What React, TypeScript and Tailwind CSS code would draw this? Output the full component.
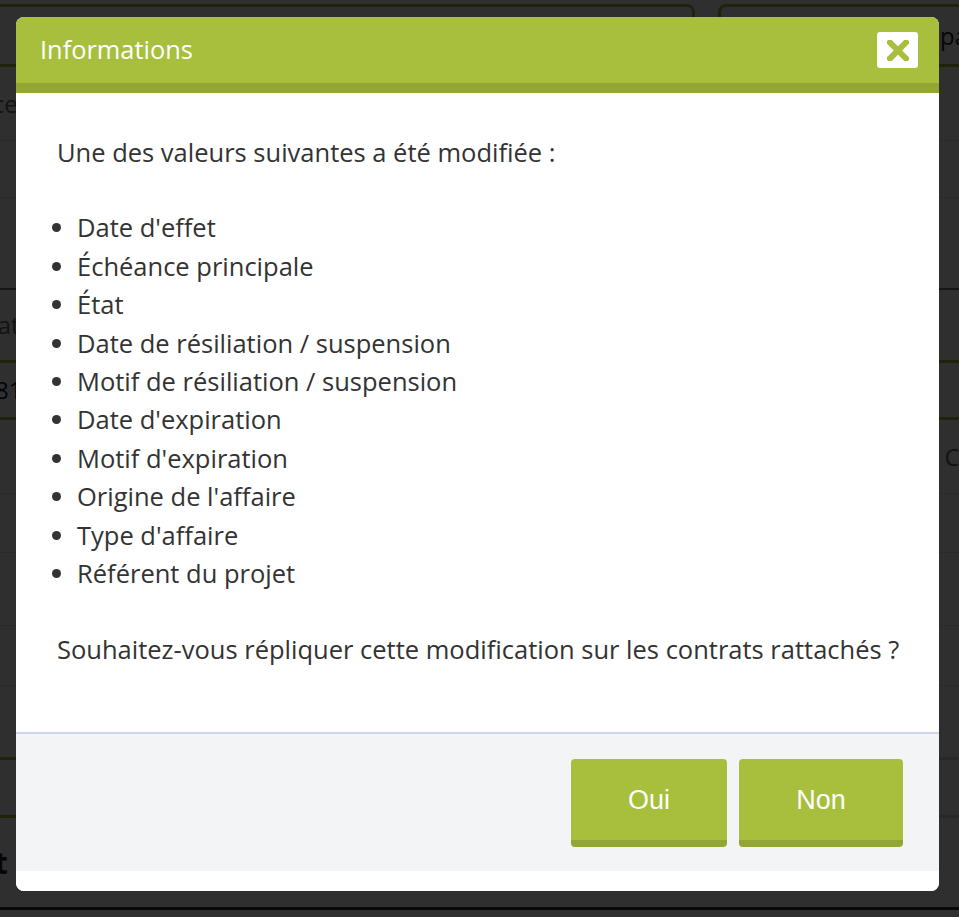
import React from "react";

const items = [
  "Date d'effet",
  "Échéance principale",
  "État",
  "Date de résiliation / suspension",
  "Motif de résiliation / suspension",
  "Date d'expiration",
  "Motif d'expiration",
  "Origine de l'affaire",
  "Type d'affaire",
  "Référent du projet",
];

function Background() {
  return (
    <div className="w-[959px] h-[917px] overflow-hidden bg-white font-['Open_Sans',sans-serif] text-[#666] text-[24px]">
      <div className="h-[4px]" />
      <div className="flex h-[63px]">
        <div className="shrink-0 ml-[-20px] w-[715px] h-full border-[3px] border-[#a7bf3c] rounded-lg" />
        <div className="shrink-0 ml-[23px] w-[400px] h-full border-[3px] border-[#a7bf3c] rounded-lg flex items-center pl-[219px] text-[#222] whitespace-nowrap">
          paramètres
        </div>
      </div>
      <div className="h-[73px] flex items-center ml-[-95px]">Référence</div>
      <div className="h-[57px] border-t border-[#e5e5e5]" />
      <div className="h-[93px] border-t border-[#e5e5e5] border-b-2 border-b-[#777]" />
      <div className="h-[70px] flex items-center ml-[-65px]">Contrat</div>
      <div className="h-[60px] flex items-center border-y-[3px] border-[#a7bf3c] ml-[-60px] pl-[55px] text-[#111]">
        81
      </div>
      <div className="h-[73px] flex items-center justify-between">
        <span className="ml-[-118px]">Échéance</span>
        <span className="mr-[-70px]">Contrat</span>
      </div>
      <div className="h-[59px] border-t border-[#e5e5e5]" />
      <div className="h-[73px] border-t border-[#e5e5e5] flex items-center ml-[-80px]">Accès</div>
      <div className="h-[60px] border-t border-[#e5e5e5]" />
      <div className="h-[72px] border-t border-[#e5e5e5]" />
      <div className="h-[61px] flex">
        <div className="w-[480px] border-y-[3px] border-[#a7bf3c]" />
        <div className="flex-1 border-y-[3px] border-[#d9d9d9]" />
      </div>
      <div className="h-[89px] flex items-center ml-[-22px] font-bold text-[30px] text-[#222]">Et</div>
      <div className="h-[3px] bg-[#333]" />
    </div>
  );
}

export default function App() {
  return (
    <div className="relative w-[959px] h-[917px] overflow-hidden">
      <Background />
      <div className="absolute inset-0 bg-black/[0.815]" />
      <div className="absolute left-[16px] top-[17px] w-[923px] h-[874px] bg-white rounded-[8px] overflow-hidden flex flex-col font-['Open_Sans',sans-serif]">
        <div className="h-[76px] shrink-0 bg-[#a7bf3c] border-b-[10px] border-[#93a634] flex items-center justify-between pl-[24px] pr-[21px]">
          <span className="text-white text-[25.4px] leading-none">Informations</span>
          <div className="w-[41px] h-[36px] bg-white rounded-[3px] flex items-center justify-center">
            <svg width="22" height="21" viewBox="0 0 22 21">
              <path d="M3 2.5 L19 18.5 M19 2.5 L3 18.5" stroke="#a7bf3c" strokeWidth="6" strokeLinecap="square" />
            </svg>
          </div>
        </div>
        <div className="h-[639px] shrink-0 pl-[41px] pr-[10px] pt-[40px] text-[#333] text-[25.5px] leading-[38.4px]">
          <p className="mb-[37px] whitespace-nowrap">Une des valeurs suivantes a été modifiée :</p>
          <ul className="list-disc pl-[20px] mb-[38px]">
            {items.map((t) => (
              <li key={t} className="whitespace-nowrap">{t}</li>
            ))}
          </ul>
          <p className="whitespace-nowrap">Souhaitez-vous répliquer cette modification sur les contrats rattachés ?</p>
        </div>
        <div className="h-[139px] shrink-0 bg-[#f3f4f6] border-t-2 border-[#cfd6ea] flex items-center justify-end gap-[12px] pr-[36px]">
          <button className="w-[156px] h-[88px] rounded-[4px] bg-[#a7bf3c] border-b-[7px] border-[#93a634] text-white text-[27px] font-['Liberation_Sans',Arial,sans-serif] pt-[2px]">
            Oui
          </button>
          <button className="w-[164px] h-[88px] rounded-[4px] bg-[#a7bf3c] border-b-[7px] border-[#93a634] text-white text-[27px] font-['Liberation_Sans',Arial,sans-serif] pt-[2px]">
            Non
          </button>
        </div>
        <div className="h-[20px] shrink-0 bg-white" />
      </div>
    </div>
  );
}
